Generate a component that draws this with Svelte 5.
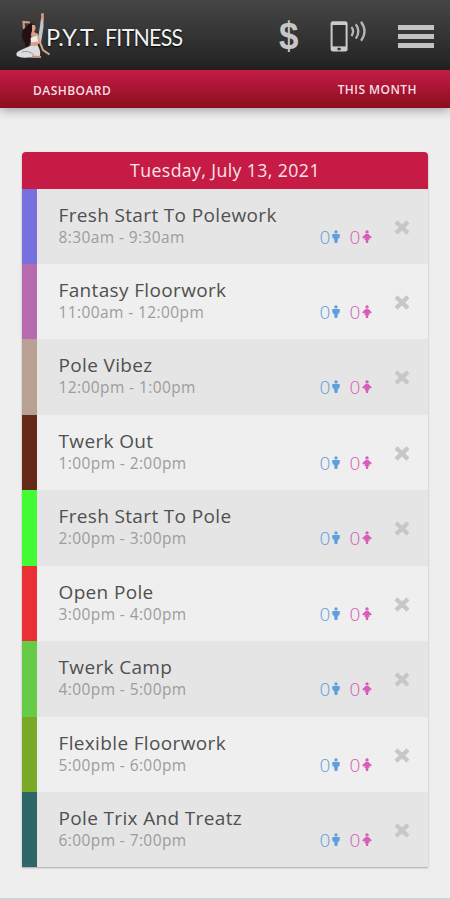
<script>
	let date = 'Tuesday, July 13, 2021';

	let classes = [
		{ name: 'Fresh Start To Polework', time: '8:30am - 9:30am', color: '#7771df', men: 0, women: 0 },
		{ name: 'Fantasy Floorwork', time: '11:00am - 12:00pm', color: '#b76aae', men: 0, women: 0 },
		{ name: 'Pole Vibez', time: '12:00pm - 1:00pm', color: '#b8a193', men: 0, women: 0 },
		{ name: 'Twerk Out', time: '1:00pm - 2:00pm', color: '#662a18', men: 0, women: 0 },
		{ name: 'Fresh Start To Pole', time: '2:00pm - 3:00pm', color: '#43fb35', men: 0, women: 0 },
		{ name: 'Open Pole', time: '3:00pm - 4:00pm', color: '#e93036', men: 0, women: 0 },
		{ name: 'Twerk Camp', time: '4:00pm - 5:00pm', color: '#68cb48', men: 0, women: 0 },
		{ name: 'Flexible Floorwork', time: '5:00pm - 6:00pm', color: '#7aaa25', men: 0, women: 0 },
		{ name: 'Pole Trix And Treatz', time: '6:00pm - 7:00pm', color: '#2f6668', men: 0, women: 0 }
	];
</script>

<div class="page">
	<header>
		<svg class="dancer" width="38" height="50" viewBox="0 0 38 50">
			<!-- raised leg and foot -->
			<path d="M23 32 L26 14 L27 6 L29.5 6 L29.5 15 L27 31 Z" fill="#c3c5ca" />
			<path d="M27.3 8 L27 1.5 L29.8 1 L29.8 8 Z" fill="#d69a78" />
			<path d="M16 10.5 L9.5 10 L10 17" fill="none" stroke="#c99a7c" stroke-width="2.2" />
			<!-- hair -->
			<path d="M13 14 Q17 9 21 13 L19 20 L17 27 L14 35 Q10 35 11 31 Q6 26 9 18 Z" fill="#241010" />
			<!-- face and body -->
			<path d="M18 13 Q22 12 21.5 17 L20 20 L24 22 L24 35 L16 35 L17.5 27 L17 22 L18 19 Z" fill="#d5a284" />
			<path d="M16.5 26 L23.5 23.5 L24 29.5 L17 30.5 Z" fill="#ececec" />
			<!-- folded leg -->
			<path d="M16 34 Q9 37 5 39 Q1 41 3 44 Q7 46.5 14 45.5 L25 45.5 Q28 41 24 34 Z" fill="#dcdde0" />
			<path d="M8 40 Q15 38 20 43" fill="none" stroke="#96989e" stroke-width="1" />
			<path d="M24 25 L29 38 L35.5 42.5" fill="none" stroke="#d8a585" stroke-width="2" />
			<path d="M18 44.5 L27 45" stroke="#c9977c" stroke-width="2.2" />
		</svg>
		<div class="brand"><span>P.Y.T.</span> <b>FITNESS</b></div>

		<span class="dollar">$</span>
		<svg class="phone" width="38" height="32" viewBox="0 0 38 32">
			<rect x=".6" y="1.2" width="17" height="30.4" rx="2.4" fill="#cbcbcb" />
			<rect x="2.6" y="5" width="13" height="21.4" fill="#303030" />
			<rect x="7.3" y="27.8" width="3.6" height="2.4" rx="1" fill="#3a3a3a" />
			<g fill="none" stroke="#b5b5b5" stroke-width="2.3">
				<path d="M21.4 7 Q24.9 11.3 21.4 16" />
				<path d="M25.8 4.2 Q31 11.3 25.8 18.6" />
				<path d="M31 1.8 Q38 11.3 31 20.8" />
			</g>
		</svg>
		<div class="menu">
			<i></i>
			<i></i>
			<i></i>
		</div>
	</header>

	<nav>
		<span class="dash">DASHBOARD</span>
		<span class="month">THIS MONTH</span>
	</nav>

	<main>
		<div class="card">
			<div class="date">{date}</div>
			{#each classes as c}
				<div class="row">
					<div class="stripe" style="background: {c.color}"></div>
					<div class="info">
						<div class="name">{c.name}</div>
						<div class="time">{c.time}</div>
					</div>
					<div class="counts">
						<span class="men">{c.men}</span>
						<svg width="8" height="14" viewBox="0 0 8 14" fill="#5f9fdd">
							<circle cx="4" cy="1.9" r="1.7" />
							<path d="M1 4 H7 Q8 4 7.9 5 L7.3 8.5 H6 L5.3 13 H2.7 L2 8.5 H.7 L.1 5 Q0 4 1 4 Z" />
						</svg>
						<span class="women">{c.women}</span>
						<svg width="10" height="14" viewBox="0 0 10 14" fill="#d65dba">
							<circle cx="5" cy="1.9" r="1.7" />
							<path d="M3.6 4 H6.4 L9.8 7.3 L8.8 8.5 L7 7.7 L7.8 9.8 H6.5 L6 13 H4 L3.5 9.8 H2.2 L3 7.7 L1.2 8.5 L.2 7.3 Z" />
						</svg>
					</div>
					<svg class="remove" width="16" height="15" viewBox="0 0 16 15">
						<path d="M2 1.9 L14 13.1 M14 1.9 L2 13.1" stroke="#c7c7c7" stroke-width="4.2" />
					</svg>
				</div>
			{/each}
		</div>
	</main>
	<div class="bottom"></div>
</div>

<style>
	.page {
		display: flex;
		flex-direction: column;
		width: 450px;
		height: 900px;
		overflow: hidden;
		background: #eeeeee;
		font-family: 'Open Sans', sans-serif;
	}

	header {
		display: flex;
		align-items: flex-start;
		box-sizing: border-box;
		height: 70px;
		flex: none;
		background: linear-gradient(#464646, #222222);
	}

	.dancer {
		margin: 12px 0 0 14px;
		flex: none;
	}

	.brand {
		display: flex;
		gap: 6px;
		width: 226px;
		margin: 22px 0 0 -6px;
		font-family: Lato, sans-serif;
		font-size: 23.5px;
		line-height: 30px;
		color: #f2f2f2;
		white-space: nowrap;
		text-shadow: 0 1px 2px #000;
	}

	.brand span {
		letter-spacing: 0.5px;
	}

	.brand b {
		font-weight: normal;
		letter-spacing: -0.8px;
		transform: scaleX(0.91);
		transform-origin: left;
	}

	.dollar {
		width: 22px;
		margin: 16px 0 0 7px;
		font-family: 'Liberation Sans', sans-serif;
		font-size: 35px;
		font-weight: bold;
		line-height: 40px;
		color: #c6c6c6;
		transform: scaleY(1.1);
	}

	.phone {
		margin: 20px 0 0 29px;
		flex: none;
	}

	.menu {
		display: flex;
		flex-direction: column;
		gap: 3.6px;
		width: 36px;
		margin: 25px 0 0 30px;
	}

	.menu i {
		height: 5.4px;
		background: #c2c2c2;
	}

	nav {
		display: flex;
		justify-content: space-between;
		box-sizing: border-box;
		height: 38px;
		flex: none;
		padding: 0 33px;
		background: linear-gradient(#c41c46, #8b0e1d);
		box-shadow: 0 2px 10px rgba(0, 0, 0, 0.35);
		font-size: 12px;
		font-weight: 600;
		line-height: 40px;
		letter-spacing: 0.45px;
		color: #f6dfe2;
	}

	.dash {
		padding-top: 1px;
	}

	main {
		flex: 1;
		padding: 43.5px 22px 0;
	}

	.card {
		border-radius: 4px 4px 0 0;
		box-shadow: 0 1px 2px rgba(0, 0, 0, 0.3);
	}

	.date {
		height: 37px;
		border-radius: 4px 4px 0 0;
		background: #c51b45;
		font-size: 17.7px;
		line-height: 37px;
		letter-spacing: 0.4px;
		text-align: center;
		color: #fae6ea;
	}

	.row {
		display: flex;
		height: 75.45px;
		background: #efefef;
	}

	.row:nth-child(even) {
		background: #e5e5e5;
	}

	.stripe {
		width: 15px;
		flex: none;
	}

	.info {
		width: 261px;
		margin-left: 21.5px;
		padding-top: 13px;
		white-space: nowrap;
	}

	.name {
		font-size: 19px;
		line-height: 26px;
		letter-spacing: 0.35px;
		color: #505050;
	}

	.time {
		font-size: 15.5px;
		line-height: 19px;
		letter-spacing: 0.4px;
		color: #9c9c9c;
	}

	.counts {
		display: flex;
		align-items: center;
		width: 55px;
		height: 20px;
		margin-top: 38px;
		font-size: 19px;
		font-weight: 300;
	}

	.men {
		width: 12.5px;
		color: #5f9fdd;
	}

	.women {
		width: 12.5px;
		margin-left: 9.5px;
		color: #d65dba;
	}

	.counts svg,
	.remove {
		flex: none;
	}

	.remove {
		margin: 31px 0 0 19.5px;
	}

	.bottom {
		height: 2px;
		background: #d2d2d2;
	}
</style>
